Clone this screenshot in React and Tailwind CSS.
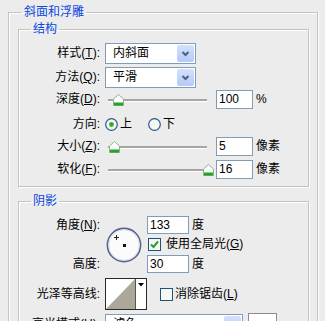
import React from "react";

function Label({ children }) {
  return <div className="w-[86px] shrink-0 pr-[5px] text-right">{children}</div>;
}

function Chevron() {
  return (
    <svg width="9" height="6" viewBox="0 0 9 6">
      <polyline points="1.5,1 4.5,4 7.5,1" fill="none" stroke="#4d6185" strokeWidth="2" />
    </svg>
  );
}

function Select({ value, w }) {
  return (
    <div className={`flex items-center h-[21px] border border-[#7f9db9] bg-white ${w}`}>
      <span className="flex-1 pl-[7px] leading-[19px]">{value}</span>
      <div className="flex h-[17px] w-[17px] mr-[1px] items-center justify-center rounded-[2px] bg-linear-to-b from-[#d4e0fc] to-[#b6c9f6]">
        <Chevron />
      </div>
    </div>
  );
}

function Input({ value, w, h }) {
  return (
    <div className={`flex items-center border border-[#7f9db9] bg-white pl-[2px] ${w} ${h}`}>
      {value}
    </div>
  );
}

function Thumb() {
  return (
    <svg width="11" height="12" viewBox="0 0 11 12">
      <path d="M0.5 11.5 V5 L5.5 0.5 L10.5 5 V11.5 Z" fill="#fdfdfd" stroke="#8fb08f" />
      <rect x="1" y="8.5" width="9" height="3" fill="#22a522" />
    </svg>
  );
}

function SliderRow({ label, pos, value, unit, className }) {
  return (
    <div className={`flex items-center h-[19px] ${className}`}>
      <Label>{label}</Label>
      <div className="relative flex h-[19px] w-[108px] items-center">
        <div className="ml-[3px] h-[2px] w-[99px] bg-[#a7a7a0] shadow-[0_1px_0_#fff]" />
        <div className="absolute top-[4px]" style={{ left: pos }}>
          <Thumb />
        </div>
      </div>
      <div className="ml-[3px]">
        <Input value={value} w="w-[37px]" h="h-[19px]" />
      </div>
      <span className="ml-[3px]">{unit}</span>
    </div>
  );
}

function Radio({ checked }) {
  return (
    <svg width="13" height="13" viewBox="0 0 13 13">
      <circle cx="6.5" cy="6.5" r="5.8" fill="#f6f6f3" stroke="#2a5a8a" strokeWidth="1.2" />
      {checked && <circle cx="6.5" cy="6.5" r="2.4" fill="#2eae2e" />}
    </svg>
  );
}

function Check({ checked }) {
  return (
    <svg width="13" height="13" viewBox="0 0 13 13">
      <rect x="0.5" y="0.5" width="12" height="12" fill="#f6f6f3" stroke="#1c5180" />
      {checked && (
        <polyline points="3,6.5 5.5,9 10,3.5" fill="none" stroke="#21a121" strokeWidth="2" />
      )}
    </svg>
  );
}

function Dial() {
  return (
    <svg width="36" height="36" viewBox="0 0 36 36">
      <circle cx="18" cy="18" r="16.6" fill="#fbfbfb" stroke="#56648a" strokeWidth="1.6" />
      <circle cx="18" cy="18" r="15.2" fill="none" stroke="#d6d9e6" strokeWidth="0.8" />
      <path d="M8 10.5 H13 M10.5 8 V13" stroke="#222" strokeWidth="1" />
      <rect x="17" y="17" width="3" height="3" fill="#111" />
    </svg>
  );
}

function Contour() {
  return (
    <div className="flex h-[32px] w-[42px] border border-[#2a2a2a] bg-white">
      <svg width="29" height="30" viewBox="0 0 29 30">
        <polygon points="0,30 29,0 29,30" fill="#aca899" />
      </svg>
      <div className="flex w-[11px] justify-center border-l border-[#555] pt-[4px]">
        <svg width="6" height="4" viewBox="0 0 6 4">
          <polygon points="0,0 6,0 3,3.5" fill="#000" />
        </svg>
      </div>
    </div>
  );
}

const etched = "border border-[#c3c3bb] shadow-[inset_1px_1px_0_#fff,1px_1px_0_#fff]";

export default function App() {
  return (
    <div className="h-[321px] w-[325px] overflow-hidden bg-[#ececec] text-[12px] leading-[15px] text-black font-['Liberation_Sans','Noto_Sans_CJK_SC',sans-serif]">
      <fieldset className={`ml-[8px] mt-[5px] w-[310px] p-0 ${etched}`}>
        <legend className="ml-[13px] px-[2px] leading-[15px] text-[#0a48e0]">斜面和浮雕</legend>

        <fieldset className={`ml-[9px] mt-[2px] w-[291px] p-0 ${etched}`}>
          <legend className="ml-[12px] px-[2px] leading-[15px] text-[#0a48e0]">结构</legend>
          <div className="pt-[6px] pb-[7px]">
            <div className="flex h-[21px] items-center">
              <Label>样式(<u>T</u>):</Label>
              <Select value="内斜面" w="w-[91px]" />
            </div>
            <div className="mt-[3px] flex h-[21px] items-center">
              <Label>方法(<u>Q</u>):</Label>
              <Select value="平滑" w="w-[91px]" />
            </div>
            <SliderRow className="mt-[2px]" label={<>深度(<u>D</u>):</>} pos={8} value="100" unit="%" />
            <div className="mt-[4px] flex h-[22px] items-center">
              <Label>方向:</Label>
              <Radio checked />
              <span className="ml-[2px]">上</span>
              <div className="ml-[16px] flex items-center">
                <Radio />
              </div>
              <span className="ml-[2px]">下</span>
            </div>
            <SliderRow className="mt-[2px]" label={<>大小(<u>Z</u>):</>} pos={4} value="5" unit="像素" />
            <SliderRow className="mt-[4px]" label={<>软化(<u>F</u>):</>} pos={98} value="16" unit="像素" />
          </div>
        </fieldset>

        <fieldset className={`ml-[9px] mt-[7px] w-[291px] p-0 ${etched}`}>
          <legend className="ml-[12px] px-[2px] leading-[15px] text-[#0a48e0]">阴影</legend>
          <div className="pt-[7px] pb-[20px]">
            <div className="grid grid-cols-[86px_42px_1fr] grid-rows-[18px_21px_18px] items-center">
              <div className="col-start-1 row-start-1 pr-[5px] text-right">角度(<u>N</u>):</div>
              <div className="col-start-2 row-start-1 row-span-3 ml-[1px] flex items-center">
                <Dial />
              </div>
              <div className="col-start-3 row-start-1 flex items-center">
                <Input value="133" w="w-[42px]" h="h-[18px]" />
                <span className="ml-[3px]">度</span>
              </div>
              <div className="col-start-3 row-start-2 flex items-center">
                <div className="ml-[1px] flex">
                  <Check checked />
                </div>
                <span className="ml-[5px]">使用全局光(<u>G</u>)</span>
              </div>
              <div className="col-start-1 row-start-3 pr-[5px] text-right">高度:</div>
              <div className="col-start-3 row-start-3 flex items-center">
                <Input value="30" w="w-[42px]" h="h-[18px]" />
                <span className="ml-[3px]">度</span>
              </div>
            </div>

            <div className="mt-[5px] flex h-[32px] items-center">
              <Label>光泽等高线:</Label>
              <Contour />
              <div className="ml-[13px] flex">
                <Check />
              </div>
              <span className="ml-[2px]">消除锯齿(<u>L</u>)</span>
            </div>

            <div className="mt-[3px] flex h-[22px] items-center">
              <Label>高光模式(<u>H</u>):</Label>
              <Select value="滤色" w="w-[138px]" />
              <div className="ml-[5px] h-[22px] w-[29px] border border-[#8c8c8c] bg-white" />
            </div>
          </div>
        </fieldset>
      </fieldset>
    </div>
  );
}
